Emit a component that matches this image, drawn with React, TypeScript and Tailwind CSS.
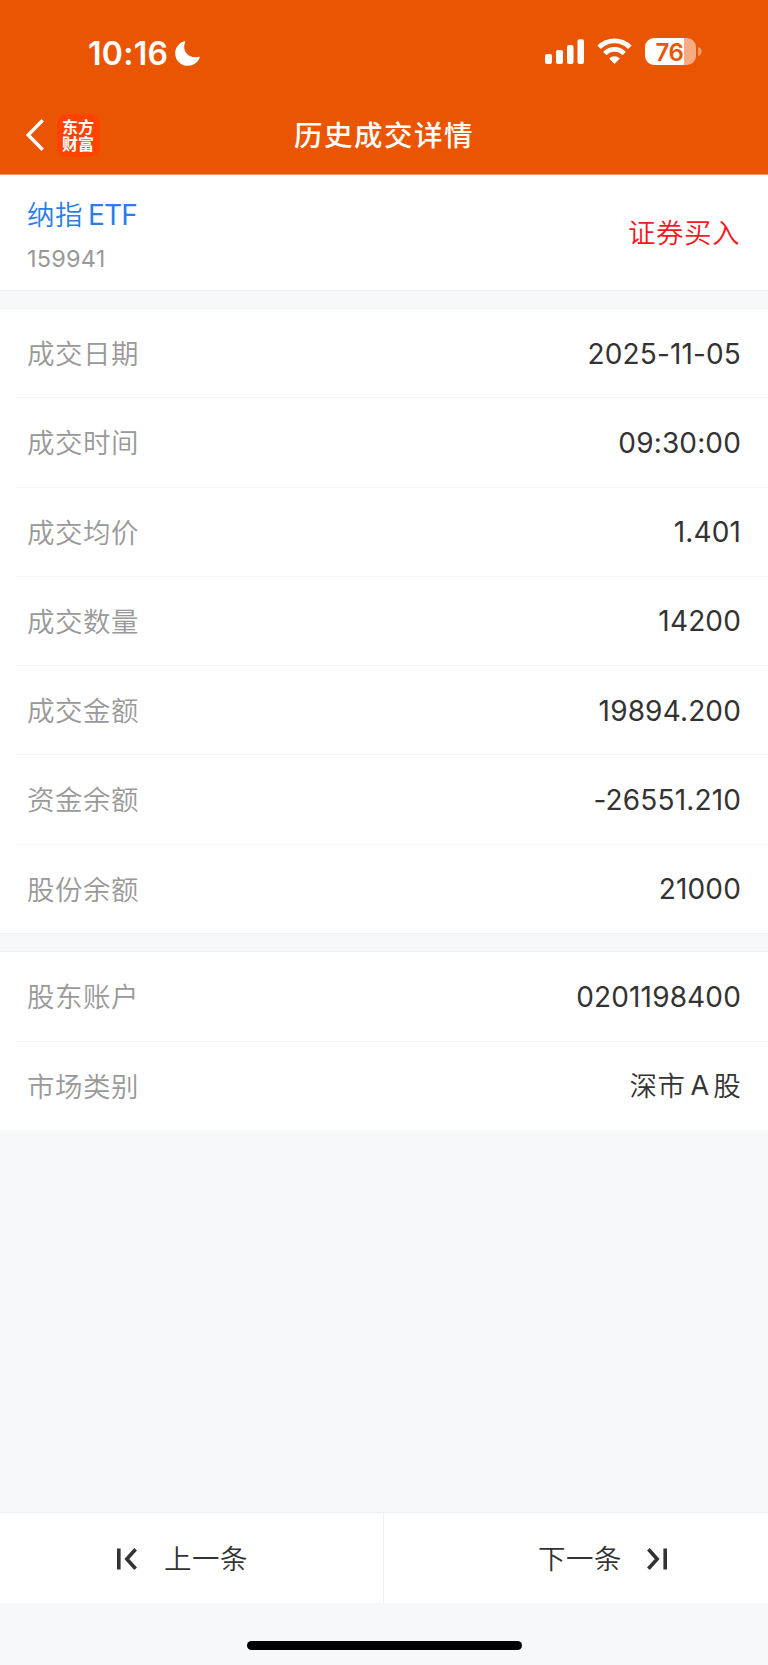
import React from 'react';

const tradeRows = [
  { label: '成交日期', value: '2025-11-05' },
  { label: '成交时间', value: '09:30:00' },
  { label: '成交均价', value: '1.401' },
  { label: '成交数量', value: '14200' },
  { label: '成交金额', value: '19894.200' },
  { label: '资金余额', value: '-26551.210' },
  { label: '股份余额', value: '21000' },
];

function StatusBar() {
  return (
    <div className="flex h-[100px] justify-between pl-[88px] pr-[66px]">
      <div className="flex h-6 mt-[41px] items-center text-white">
        <span className="w-[79px] pt-px text-[32px] leading-6 font-semibold tracking-[0.3px]">10:16</span>
        <svg width="25" height="25" viewBox="0 0 25 25" className="ml-2 shrink-0" fill="currentColor">
          <path d="M9.2 0.3 C9.9 0 10.5 0.5 10.2 1.2 C8.6 4.6 8.8 9.2 11.7 12.5 C14.5 15.8 19.4 17.2 23.6 15.8 C24.4 15.5 25 16 24.7 16.8 C22.8 21.6 18.3 24.8 13 24.8 C5.9 24.8 0.2 19.4 0.2 12.4 C0.2 6.8 3.8 2.1 9.2 0.3 Z" />
        </svg>
      </div>
      <div className="flex h-[27px] mt-[38px] items-start">
        <svg width="40" height="27" viewBox="0 0 40 27" fill="#fff">
          <rect x="0" y="16" width="7" height="10" rx="2" />
          <rect x="11" y="12" width="7" height="14" rx="2" />
          <rect x="22" y="7" width="6.5" height="19" rx="2" />
          <rect x="32.5" y="1.3" width="6.5" height="24.7" rx="2" />
        </svg>
        <svg width="35" height="27" viewBox="0 0 35 27" className="ml-3" fill="none" stroke="#fff" strokeWidth="4.8">
          <path d="M2.1 9.3 A21.6 21.6 0 0 1 32.9 9.3" />
          <path d="M7.8 15.6 A13.4 13.4 0 0 1 27.2 15.6" />
          <path d="M17.5 26 L12.2 20.6 A7.4 7.4 0 0 1 22.8 20.6 Z" fill="#fff" stroke="none" />
        </svg>
        <div className="ml-[13px] flex h-[27px] w-[51px] items-center justify-center rounded-[9px] bg-[linear-gradient(to_right,#fff_39px,#f6ac82_39px)]">
          <span className="pt-px pr-[2px] text-[24px] leading-[27px] font-semibold tracking-[-0.5px] text-[#ea5504]">76</span>
        </div>
        <svg width="4" height="9" viewBox="0 0 4 9" className="ml-[2px] mt-[9px]">
          <path d="M0 0 C5 1.5 5 7.5 0 9 Z" fill="#f29a68" />
        </svg>
      </div>
    </div>
  );
}

function NavBar() {
  return (
    <div className="grid h-[74px] grid-cols-3 pt-[14px]">
      <div className="flex h-[42px] items-center pl-[26px]">
        <svg width="18" height="32" viewBox="0 0 18 32" fill="none" stroke="#fff" strokeWidth="3.4">
          <path d="M16.7 1.3 L2.2 16 L16.7 30.7" />
        </svg>
        <div className="ml-[13px] flex size-[43px] items-center justify-center rounded-[10px] bg-[#ff4200]">
          <span className="w-[33px] font-['Noto_Sans_CJK_SC',sans-serif] text-[16px] leading-[17px] font-bold break-all text-white">东方财富</span>
        </div>
      </div>
      <h1 className="pt-px text-center text-[28.5px] leading-[42px] font-medium tracking-[1.5px] whitespace-nowrap text-white">历史成交详情</h1>
    </div>
  );
}

function Row({ label, last = false, children }: { label: string; last?: boolean; children: React.ReactNode }) {
  return (
    <div className={`ml-4 flex flex-1 items-center justify-between pr-[27px] pl-[11px] ${last ? '' : 'border-b border-[#f5f5f6]'}`}>
      <span className="pt-[3px] text-[27.5px] font-[350] tracking-[0.5px] text-[#999]">{label}</span>
      <span className="flex items-center pt-px text-[28px] font-[370] tracking-[0.15px] text-[#333]">{children}</span>
    </div>
  );
}

export default function App() {
  return (
    <div className="flex h-[1665px] w-[768px] flex-col bg-[#f7f8fa] font-[Inter,'Noto_Sans_CJK_SC',sans-serif]">
      <header className="h-[175px] border-b border-[#f5965f] bg-[#ea5504]">
        <StatusBar />
        <NavBar />
      </header>

      <section className="flex h-[116px] items-center justify-between border-b border-[#f3f3f5] bg-white px-[27px]">
        <div className="flex flex-col pt-[10px]">
          <div className="flex items-center gap-[5px] leading-10 text-[#2b7de9]">
            <span className="text-[27.5px] font-[350] tracking-[0.5px]">纳指</span>
            <span className="text-[28px] font-[370] tracking-[-0.8px]">ETF</span>
          </div>
          <span className="mt-[3px] text-[23.5px] leading-[42px] font-[370] tracking-[0.2px] text-[#999]">159941</span>
        </div>
        <span className="pt-[2px] pr-px text-[27.5px] font-[350] tracking-[0.5px] text-[#f5191e]">证券买入</span>
      </section>

      <section className="mt-[17px] flex h-[626px] flex-col border-y border-[#f2f2f4] bg-white">
        {tradeRows.map((row, i) => (
          <Row key={row.label} label={row.label} last={i === tradeRows.length - 1}>
            {row.value}
          </Row>
        ))}
      </section>

      <section className="mt-[17px] flex h-[179px] flex-col border-t border-[#f2f2f4] bg-white">
        <Row label="股东账户">0201198400</Row>
        <Row label="市场类别" last>
          <span className="pt-px text-[27.5px] font-[350] tracking-[0.5px]">深市</span>
          <span className="mx-[5px] text-[27px] tracking-[-0.8px]">A</span>
          <span className="pt-px text-[27.5px] font-[350]">股</span>
        </Row>
      </section>

      <footer className="mt-auto">
        <div className="flex h-[91px] border-t border-[#f0f0f3] bg-white text-[27.5px] font-[350] tracking-[0.5px] text-[#333]">
          <button className="flex w-[384px] items-center border-r border-[#f0f0f3] pl-[117px]">
            <svg width="20" height="22" viewBox="0 0 20 22" className="mt-px" fill="none" stroke="#333" strokeWidth="3.6">
              <path d="M1.8 0.5 V21.5 M18.6 1.2 L9.8 11 L18.6 20.8" />
            </svg>
            <span className="ml-[27px] pt-[3px]">上一条</span>
          </button>
          <button className="flex flex-1 items-center justify-end pr-[101px]">
            <span className="pt-[3px]">下一条</span>
            <svg width="20" height="22" viewBox="0 0 20 22" className="mt-px ml-[25px]" fill="none" stroke="#333" strokeWidth="3.6">
              <path d="M18.2 0.5 V21.5 M1.4 1.2 L10.2 11 L1.4 20.8" />
            </svg>
          </button>
        </div>
        <div className="flex h-[62px] justify-center pt-[38px]">
          <div className="h-[9px] w-[275px] rounded-full bg-black" />
        </div>
      </footer>
    </div>
  );
}
